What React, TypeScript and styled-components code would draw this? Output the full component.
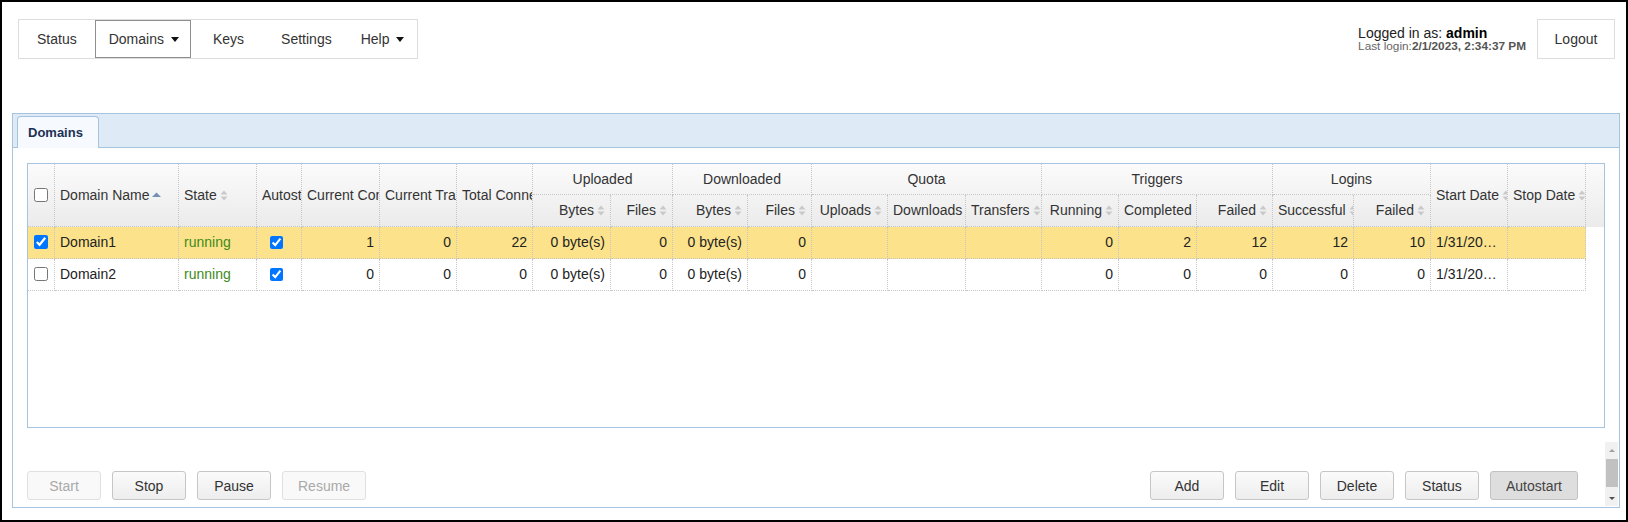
import React from 'react';
import styled, { createGlobalStyle, css } from 'styled-components';

const GlobalStyle = createGlobalStyle`
  html, body { margin: 0; padding: 0; background: #fff; }
  body { font-family: 'Liberation Sans', Arial, sans-serif; }
`;

type Align = 'left' | 'right' | 'center';

const WIDTHS = [27, 124, 78, 45, 78, 77, 76, 78, 62, 75, 64, 76, 78, 76, 77, 78, 76, 81, 77, 77, 78];
const TEMPLATE = WIDTHS.map((w) => `${w}px`).join(' ');
const GRID_WIDTH = WIDTHS.reduce((a, b) => a + b, 0);
const HEAD_ROWS = [31, 32];

const BORDER_BLUE = '#a6c3df';
const CELL_LINE = '1px dotted #c6c6c6';

const Frame = styled.div`
  width: 1628px;
  height: 522px;
  box-sizing: border-box;
  border: 2px solid #000;
  display: flex;
  flex-direction: column;
  font-size: 14px;
  color: #333;
  overflow: hidden;
`;

const TopBar = styled.div`
  display: flex;
  justify-content: space-between;
  align-items: flex-start;
  padding: 17px 11px 0 16px;
`;

const Nav = styled.nav`
  display: flex;
  height: 40px;
  box-sizing: border-box;
  border: 1px solid #ddd;
`;

const NavItem = styled.div<{ $active?: boolean; $pad?: string }>`
  display: flex;
  align-items: center;
  padding: ${(p) => p.$pad ?? '0 18px'};
  color: #333;
  cursor: pointer;

  ${(p) =>
    p.$active &&
    css`
      border: 1px solid #8e8e8e;
      padding: 0 11px 0 13px;
    `}
`;

const Caret = styled.span`
  width: 0;
  height: 0;
  margin-left: 7px;
  border-left: 4px solid transparent;
  border-right: 4px solid transparent;
  border-top: 5px solid #111;
`;

const UserBox = styled.div`
  display: flex;
  align-items: center;
  gap: 11px;
`;

const UserInfo = styled.div`
  display: flex;
  flex-direction: column;
  line-height: 14px;
  color: #222;

  b { color: #000; }
  small {
    font-size: 11.8px;
    color: #666;
    line-height: 13px;
  }
  small b { color: #555; }
`;

const Logout = styled.button`
  width: 78px;
  height: 40px;
  border: 1px solid #ddd;
  background: #fff;
  font: 14px 'Liberation Sans', Arial, sans-serif;
  color: #333;
`;

const Panel = styled.section`
  margin: 54px 6px 0 10px;
  height: 395px;
  box-sizing: border-box;
  border: 1px solid ${BORDER_BLUE};
  display: flex;
  flex-direction: column;
`;

const TabStrip = styled.div`
  display: flex;
  align-items: flex-end;
  padding: 2px 0 0 4px;
  background: #dfeaf7;
  border-bottom: 1px solid ${BORDER_BLUE};
`;

const Tab = styled.div`
  height: 32px;
  box-sizing: border-box;
  margin-bottom: -1px;
  padding: 0 15px 0 10px;
  border: 1px solid ${BORDER_BLUE};
  border-bottom: none;
  border-radius: 4px 4px 0 0;
  background: #f6f9fd;
  display: flex;
  align-items: center;
  font-size: 13px;
  font-weight: bold;
  color: #1d3156;
`;

const Content = styled.div`
  display: flex;
  flex-direction: column;
  padding: 15px 14px 0;
`;

const GridBox = styled.div`
  height: 265px;
  box-sizing: border-box;
  border: 1px solid ${BORDER_BLUE};
  background: #fff;
  overflow: hidden;
`;

const HeaderBar = styled.div`
  background: linear-gradient(#fbfbfb, #ebebeb);
`;

const HeaderGrid = styled.div`
  display: grid;
  width: ${GRID_WIDTH}px;
  grid-template-columns: ${TEMPLATE};
  grid-template-rows: ${HEAD_ROWS[0]}px ${HEAD_ROWS[1]}px;
`;

const HeadCell = styled.div<{ $rows: number; $cols: number; $align: Align }>`
  grid-row: span ${(p) => p.$rows};
  grid-column: span ${(p) => p.$cols};
  box-sizing: border-box;
  padding: 0 5px;
  border-right: ${CELL_LINE};
  border-bottom: ${CELL_LINE};
  line-height: ${(p) => (p.$rows === 2 ? HEAD_ROWS[0] + HEAD_ROWS[1] : HEAD_ROWS[0]) - 1}px;
  text-align: ${(p) => p.$align};
  white-space: nowrap;
  overflow: hidden;
  color: #333;
`;

const SortSvg = styled.svg`
  margin-left: 3px;
  vertical-align: middle;
  position: relative;
  top: -1px;
`;

const Row = styled.div<{ $selected?: boolean }>`
  display: grid;
  width: ${GRID_WIDTH}px;
  grid-template-columns: ${TEMPLATE};
  height: 32px;
  background: ${(p) => (p.$selected ? '#fce38b' : '#fff')};
`;

const Cell = styled.div<{ $align: Align; $state?: boolean; $check?: 'row' | 'auto' }>`
  box-sizing: border-box;
  padding: 0 5px;
  border-right: ${CELL_LINE};
  border-bottom: ${CELL_LINE};
  line-height: 31px;
  text-align: ${(p) => p.$align};
  white-space: nowrap;
  overflow: hidden;
  text-overflow: ellipsis;
  color: ${(p) => (p.$state ? '#3d8a1a' : '#222')};
  ${(p) => p.$check === 'auto' && css`padding: 0 10px 0 5px;`}
`;

const Check = styled.input<{ $size?: number }>`
  width: ${(p) => p.$size ?? 14}px;
  height: ${(p) => p.$size ?? 14}px;
  margin: 0;
  vertical-align: middle;
  position: relative;
  top: -1px;
  accent-color: #0075ff;
`;

const Footer = styled.div`
  display: flex;
  height: 64px;
  margin: 14px -13px 0 0;
`;

const ButtonGroup = styled.div<{ $right?: boolean }>`
  display: flex;
  gap: 11px;
  align-self: flex-end;
  margin-bottom: 6px;
  ${(p) => p.$right && css`margin-left: auto; margin-right: 27px;`}
`;

const Button = styled.button<{ $pressed?: boolean }>`
  height: 29px;
  min-width: 74px;
  padding: 0 15px;
  box-sizing: border-box;
  font: 14px 'Liberation Sans', Arial, sans-serif;
  color: #333;
  background: linear-gradient(#fbfbfb, #ededed);
  border: 1px solid #c6c6c6;
  border-radius: 3px;

  &:disabled {
    color: #a9a9a9;
    border-color: #e0e0e0;
    background: #f9f9f9;
  }

  ${(p) =>
    p.$pressed &&
    css`
      background: #dedede;
      border-color: #c2c2c2;
      color: #444;
    `}
`;

const ScrollTrack = styled.div`
  width: 13px;
  align-self: stretch;
  background: #f1f1f1;
  display: flex;
  flex-direction: column;
  align-items: center;
`;

const ScrollArrow = styled.div<{ $dir: 'up' | 'down' }>`
  height: ${(p) => (p.$dir === 'up' ? 17 : 15)}px;
  display: flex;
  align-items: center;
  justify-content: center;
  ${(p) => p.$dir === 'down' && css`margin-top: auto;`}

  &::after {
    content: '';
    border-left: 3px solid transparent;
    border-right: 3px solid transparent;
    ${(p) =>
      p.$dir === 'up'
        ? css`border-bottom: 3px solid #a0a0a0;`
        : css`border-top: 3px solid #505050;`}
  }
`;

const ScrollThumb = styled.div`
  width: 12px;
  height: 28px;
  background: #c1c1c1;
`;

function SortIcon({ dir }: { dir: 'asc' | 'both' }) {
  if (dir === 'asc') {
    return (
      <SortSvg width={9} height={6} viewBox="0 0 9 6">
        <path d="M0 5 L4.5 0.5 L9 5 Z" fill="#7590b4" />
      </SortSvg>
    );
  }
  return (
    <SortSvg width={8} height={11} viewBox="0 0 8 11">
      <path d="M0.5 4.5 L4 0.5 L7.5 4.5 Z M0.5 6.5 L4 10.5 L7.5 6.5 Z" fill="#c9c9c9" />
    </SortSvg>
  );
}

type HeadSpec = { title?: string; cols?: number; rows?: number; align: Align; sort?: 'asc' | 'both'; check?: boolean };

const HEAD: HeadSpec[] = [
  { check: true, rows: 2, align: 'center' },
  { title: 'Domain Name', rows: 2, align: 'left', sort: 'asc' },
  { title: 'State', rows: 2, align: 'left', sort: 'both' },
  { title: 'Autostart', rows: 2, align: 'center', sort: 'both' },
  { title: 'Current Connections', rows: 2, align: 'right', sort: 'both' },
  { title: 'Current Transfers', rows: 2, align: 'right', sort: 'both' },
  { title: 'Total Connections', rows: 2, align: 'right', sort: 'both' },
  { title: 'Uploaded', cols: 2, align: 'center' },
  { title: 'Downloaded', cols: 2, align: 'center' },
  { title: 'Quota', cols: 3, align: 'center' },
  { title: 'Triggers', cols: 3, align: 'center' },
  { title: 'Logins', cols: 2, align: 'center' },
  { title: 'Start Date', rows: 2, align: 'left', sort: 'both' },
  { title: 'Stop Date', rows: 2, align: 'left', sort: 'both' },
  // second header row, filled in by auto-placement
  { title: 'Bytes', align: 'right', sort: 'both' },
  { title: 'Files', align: 'right', sort: 'both' },
  { title: 'Bytes', align: 'right', sort: 'both' },
  { title: 'Files', align: 'right', sort: 'both' },
  { title: 'Uploads', align: 'right', sort: 'both' },
  { title: 'Downloads', align: 'right', sort: 'both' },
  { title: 'Transfers', align: 'right', sort: 'both' },
  { title: 'Running', align: 'right', sort: 'both' },
  { title: 'Completed', align: 'right', sort: 'both' },
  { title: 'Failed', align: 'right', sort: 'both' },
  { title: 'Successful', align: 'right', sort: 'both' },
  { title: 'Failed', align: 'right', sort: 'both' },
];

const ALIGNS: Align[] = [
  'center', 'left', 'left', 'center', 'right', 'right', 'right',
  'right', 'right', 'right', 'right',
  'right', 'right', 'right',
  'right', 'right', 'right',
  'right', 'right',
  'left', 'left',
];

interface Domain {
  name: string;
  selected: boolean;
  state: string;
  autostart: boolean;
  values: (string | number)[]; // current conn .. logins failed
  startDate: string;
  stopDate: string;
}

const DOMAINS: Domain[] = [
  {
    name: 'Domain1',
    selected: true,
    state: 'running',
    autostart: true,
    values: [1, 0, 22, '0 byte(s)', 0, '0 byte(s)', 0, '', '', '', 0, 2, 12, 12, 10],
    startDate: '1/31/2023, 9:12:45 AM',
    stopDate: '',
  },
  {
    name: 'Domain2',
    selected: false,
    state: 'running',
    autostart: true,
    values: [0, 0, 0, '0 byte(s)', 0, '0 byte(s)', 0, '', '', '', 0, 0, 0, 0, 0],
    startDate: '1/31/2023, 9:12:46 AM',
    stopDate: '',
  },
];

function DomainRow({ d }: { d: Domain }) {
  const rest = [...d.values, d.startDate, d.stopDate];
  return (
    <Row $selected={d.selected}>
      <Cell $align="center">
        <Check type="checkbox" checked={d.selected} readOnly />
      </Cell>
      <Cell $align="left">{d.name}</Cell>
      <Cell $align="left" $state>{d.state}</Cell>
      <Cell $align="center" $check="auto">
        <Check type="checkbox" $size={13} checked={d.autostart} readOnly />
      </Cell>
      {rest.map((v, i) => (
        <Cell key={i} $align={ALIGNS[i + 4]}>{v}</Cell>
      ))}
    </Row>
  );
}

export default function App() {
  return (
    <>
      <GlobalStyle />
      <Frame>
        <TopBar>
          <Nav>
            <NavItem>Status</NavItem>
            <NavItem $active>Domains<Caret /></NavItem>
            <NavItem $pad="0 19px 0 22px">Keys</NavItem>
            <NavItem $pad="0 16px 0 18px">Settings</NavItem>
            <NavItem $pad="0 13px">Help<Caret /></NavItem>
          </Nav>
          <UserBox>
            <UserInfo>
              <span>Logged in as: <b>admin</b></span>
              <small>Last login:<b>2/1/2023, 2:34:37 PM</b></small>
            </UserInfo>
            <Logout>Logout</Logout>
          </UserBox>
        </TopBar>

        <Panel>
          <TabStrip>
            <Tab>Domains</Tab>
          </TabStrip>
          <Content>
            <GridBox>
              <HeaderBar>
                <HeaderGrid>
                  {HEAD.map((h, i) => (
                    <HeadCell key={i} $rows={h.rows ?? 1} $cols={h.cols ?? 1} $align={h.align}>
                      {h.check ? <Check type="checkbox" readOnly checked={false} /> : h.title}
                      {h.sort && <SortIcon dir={h.sort} />}
                    </HeadCell>
                  ))}
                </HeaderGrid>
              </HeaderBar>
              {DOMAINS.map((d) => (
                <DomainRow key={d.name} d={d} />
              ))}
            </GridBox>

            <Footer>
              <ButtonGroup>
                <Button disabled>Start</Button>
                <Button>Stop</Button>
                <Button>Pause</Button>
                <Button disabled>Resume</Button>
              </ButtonGroup>
              <ButtonGroup $right>
                <Button>Add</Button>
                <Button>Edit</Button>
                <Button>Delete</Button>
                <Button>Status</Button>
                <Button $pressed>Autostart</Button>
              </ButtonGroup>
              <ScrollTrack>
                <ScrollArrow $dir="up" />
                <ScrollThumb />
                <ScrollArrow $dir="down" />
              </ScrollTrack>
            </Footer>
          </Content>
        </Panel>
      </Frame>
    </>
  );
}
